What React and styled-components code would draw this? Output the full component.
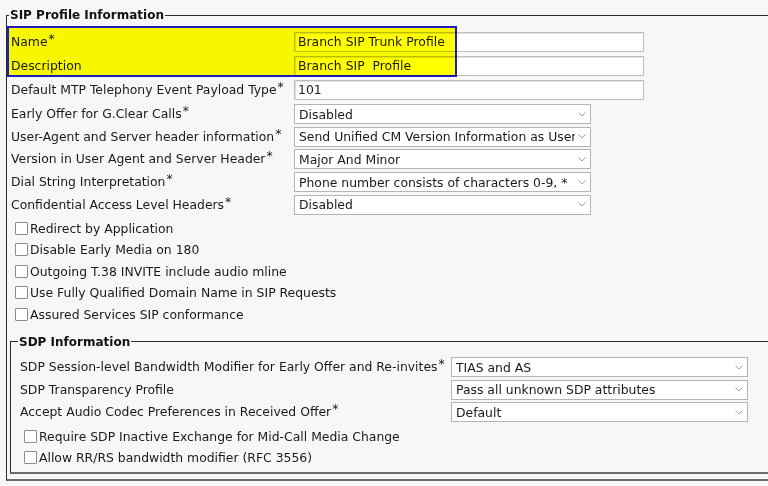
import React from 'react';
import styled, { createGlobalStyle } from 'styled-components';

const GlobalStyle = createGlobalStyle`
    html, body {
        margin: 0;
        padding: 0;
        background: #f7f7f7;
        overflow: hidden;
    }
    body {
        font-family: 'DejaVu Sans', Verdana, sans-serif;
        font-size: 12.4px;
        color: #1a1a1a;
    }
`;

const Page = styled.div`
    padding: 0 0 0 6px;
    width: 800px;
`;

const Fieldset = styled.fieldset`
    margin: ${(p) => p.$margin || '7px 0 0 0'};
    padding: ${(p) => p.$padding || '7px 0 0 2px'};
    border: 1px solid #2b2b2b;
    border-bottom: 2px solid #6c6c6c;
    border-right: none;
    min-width: 0;
`;

const Legend = styled.legend`
    font-weight: bold;
    font-size: 12px;
    line-height: 16px;
    padding: 0 1px;
    color: #111;
`;

const Rows = styled.div`
    display: flex;
    flex-direction: column;
    padding-left: 2px;
`;

const Row = styled.div`
    display: grid;
    grid-template-columns: ${(p) => p.$label}px auto;
    align-items: center;
    height: ${(p) => p.$height || 22.6}px;
    margin-top: ${(p) => p.$top || 0}px;
`;

const Label = styled.span`
    white-space: nowrap;
    line-height: 16px;
`;

const Star = styled.span`
    position: relative;
    top: -3px;
    margin-left: 1px;
`;

const Highlight = styled.div`
    position: relative;
    &::after {
        content: '';
        position: absolute;
        left: -4px;
        top: -4px;
        width: 446px;
        height: 47px;
        background: #ffff00;
        border: 2px solid #1f1fc4;
        mix-blend-mode: multiply;
        pointer-events: none;
    }
`;

const TextInput = styled.div`
    box-sizing: border-box;
    width: 350px;
    height: 20px;
    background: #fff;
    border: 1px solid #bdbdbd;
    box-shadow: inset 1px 1px 0 #e2e2e2;
    padding: 0 3px;
    line-height: 18px;
    white-space: pre;
    overflow: hidden;
`;

const Select = styled.div`
    box-sizing: border-box;
    width: 297px;
    height: 20px;
    background: #fff;
    border: 1px solid #b4b4b4;
    display: flex;
    align-items: center;
    padding: 0 4px 0 4px;
    gap: 3px;
    overflow: hidden;
`;

const SelectText = styled.span`
    flex: 1;
    white-space: nowrap;
    overflow: hidden;
`;

const Chevron = () => (
    <svg width="8" height="5" viewBox="0 0 8 5">
        <path d="M0.5 0.5 L4 4 L7.5 0.5" fill="none" stroke="#a0a0a0" strokeWidth="1" />
    </svg>
);

const CheckRow = styled.label`
    display: flex;
    align-items: center;
    height: 21.5px;
    margin-top: ${(p) => p.$top || 0}px;
    padding-left: 4px;
    white-space: nowrap;
`;

const Box = styled.input`
    appearance: none;
    margin: 0 2px 0 0;
    width: 13px;
    height: 13px;
    box-sizing: border-box;
    border: 1px solid #8c8c8c;
    border-radius: 1px;
    background: #fff;
`;

const TextRow = ({ label, value, star, width = 283 }) => (
    <Row $label={width} $height={24}>
        <Label>{label}{star && <Star>*</Star>}</Label>
        <TextInput>{value}</TextInput>
    </Row>
);

const SelectRow = ({ label, value, star, width = 283, top }) => (
    <Row $label={width} $top={top}>
        <Label>{label}{star && <Star>*</Star>}</Label>
        <Select>
            <SelectText>{value}</SelectText>
            <Chevron />
        </Select>
    </Row>
);

const Check = ({ label, top }) => (
    <CheckRow $top={top}>
        <Box type="checkbox" />
        {label}
    </CheckRow>
);

const sipSelects = [
    ['Early Offer for G.Clear Calls', 'Disabled'],
    ['User-Agent and Server header information', 'Send Unified CM Version Information as User'],
    ['Version in User Agent and Server Header', 'Major And Minor'],
    ['Dial String Interpretation', 'Phone number consists of characters 0-9, *'],
    ['Confidential Access Level Headers', 'Disabled'],
];

const sipChecks = [
    'Redirect by Application',
    'Disable Early Media on 180',
    'Outgoing T.38 INVITE include audio mline',
    'Use Fully Qualified Domain Name in SIP Requests',
    'Assured Services SIP conformance',
];

export default function App() {
    return (
        <>
            <GlobalStyle />
            <Page>
                <Fieldset>
                    <Legend>SIP Profile Information</Legend>
                    <Rows>
                        <Highlight>
                            <TextRow label="Name" star value="Branch SIP Trunk Profile" />
                            <TextRow label="Description" value="Branch SIP  Profile" />
                        </Highlight>
                        <TextRow label="Default MTP Telephony Event Payload Type" star value="101" />
                        {sipSelects.map(([l, v], i) => (
                            <SelectRow key={l} label={l} value={v} star top={i === 0 ? 1 : 0} />
                        ))}
                        {sipChecks.map((c, i) => (
                            <Check key={c} label={c} top={i === 0 ? 1.5 : 0} />
                        ))}
                    </Rows>
                    <Fieldset $margin="9px 0 5px 1px" $padding="6px 0 4px 7px">
                        <Legend>SDP Information</Legend>
                        <Rows>
                            <SelectRow width={431} star label="SDP Session-level Bandwidth Modifier for Early Offer and Re-invites" value="TIAS and AS" />
                            <SelectRow width={431} label="SDP Transparency Profile" value="Pass all unknown SDP attributes" />
                            <SelectRow width={431} star label="Accept Audio Codec Preferences in Received Offer" value="Default" />
                            <Check top={1.5} label="Require SDP Inactive Exchange for Mid-Call Media Change" />
                            <Check label="Allow RR/RS bandwidth modifier (RFC 3556)" />
                        </Rows>
                    </Fieldset>
                </Fieldset>
            </Page>
        </>
    );
}
